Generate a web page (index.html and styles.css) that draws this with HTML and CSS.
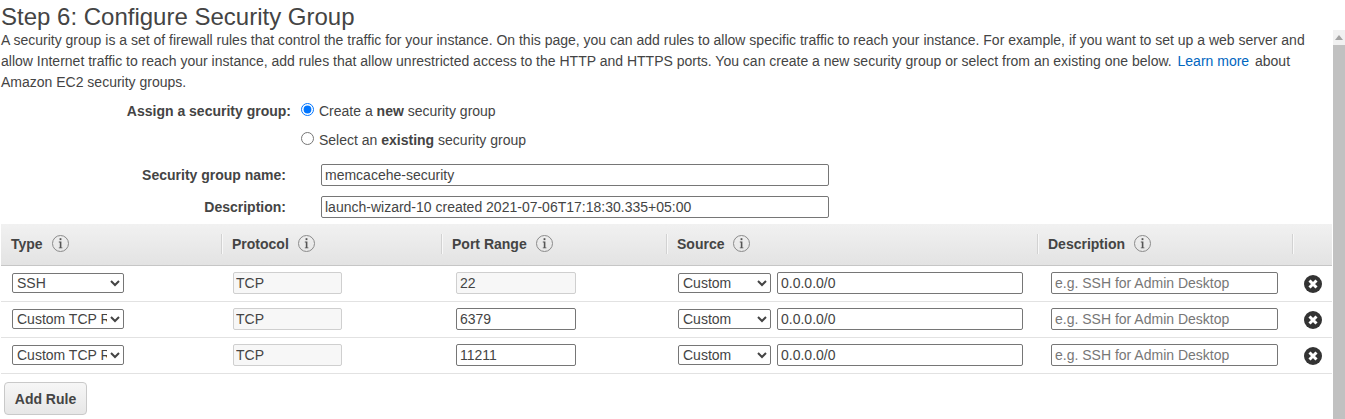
FILE: index.html
```html
<!DOCTYPE html>
<html lang="en">
<head>
<meta charset="utf-8">
<title>Step 6: Configure Security Group</title>
<link rel="stylesheet" href="styles.css">
</head>
<body>
<svg class="defs" width="0" height="0" aria-hidden="true">
  <symbol id="info" viewBox="0 0 17 17">
    <circle cx="8.5" cy="8.5" r="8" fill="none" stroke="#8a8a8a" stroke-width="1"/>
    <rect x="7.6" y="3.2" width="1.8" height="1.9" fill="#555"/>
    <path d="M6.8 6.6h2.6v5.8h1v.9H6.8v-.9h1V7.5h-1z" fill="#555"/>
  </symbol>
  <symbol id="remove" viewBox="0 0 18 18">
    <circle cx="9" cy="9" r="9" fill="#333"/>
    <path d="M5.5 5.5l7 7M12.5 5.5l-7 7" stroke="#fff" stroke-width="3" fill="none"/>
  </symbol>
</svg>
<h1 class="title">Step 6: Configure Security Group</h1>
<div class="pane">
  <main class="content">
    <p class="intro">A security group is a set of firewall rules that control the traffic for your instance. On this page, you can add rules to allow specific traffic to reach your instance. For example, if you want to set up a web server and allow Internet traffic to reach your instance, add rules that allow unrestricted access to the HTTP and HTTPS ports. You can create a new security group or select from an existing one below. <a href="#" class="link">Learn more</a> about Amazon EC2 security groups.</p>

    <div class="assign">
      <div class="assign-label">Assign a security group:</div>
      <div class="assign-options">
        <label class="option"><input type="radio" name="sg" class="radio" checked><span>Create a <b>new</b> security group</span></label>
        <label class="option"><input type="radio" name="sg" class="radio"><span>Select an <b>existing</b> security group</span></label>
      </div>
    </div>

    <div class="fields">
      <label class="field-label" for="sg-name">Security group name:</label>
      <input id="sg-name" class="ctl field-input" type="text" value="memcacehe-security">
      <label class="field-label" for="sg-desc">Description:</label>
      <input id="sg-desc" class="ctl field-input" type="text" value="launch-wizard-10 created 2021-07-06T17:18:30.335+05:00">
    </div>

    <table class="rules">
      <colgroup>
        <col class="c-type"><col class="c-proto"><col class="c-port"><col class="c-source"><col class="c-desc"><col class="c-x">
      </colgroup>
      <thead>
        <tr>
          <th><div class="th first">Type <svg class="info"><use href="#info"/></svg></div></th>
          <th><div class="th">Protocol <svg class="info"><use href="#info"/></svg></div></th>
          <th><div class="th">Port Range <svg class="info"><use href="#info"/></svg></div></th>
          <th><div class="th">Source <svg class="info"><use href="#info"/></svg></div></th>
          <th><div class="th">Description <svg class="info"><use href="#info"/></svg></div></th>
          <th><div class="th">&nbsp;</div></th>
        </tr>
      </thead>
      <tbody>
        <tr>
          <td class="p-type"><select class="ctl sel type-sel"><option>SSH</option></select></td>
          <td class="p-proto"><input class="ctl proto ro" type="text" value="TCP" readonly></td>
          <td class="p-port"><input class="ctl port ro" type="text" value="22" readonly></td>
          <td class="p-source"><div class="source"><select class="ctl sel source-sel"><option>Custom</option></select><input class="ctl cidr" type="text" value="0.0.0.0/0"></div></td>
          <td class="p-desc"><input class="ctl desc" type="text" placeholder="e.g. SSH for Admin Desktop"></td>
          <td class="p-x"><svg class="remove"><use href="#remove"/></svg></td>
        </tr>
        <tr>
          <td class="p-type"><select class="ctl sel type-sel"><option>Custom TCP Rule</option></select></td>
          <td class="p-proto"><input class="ctl proto ro" type="text" value="TCP" readonly></td>
          <td class="p-port"><input class="ctl port" type="text" value="6379"></td>
          <td class="p-source"><div class="source"><select class="ctl sel source-sel"><option>Custom</option></select><input class="ctl cidr" type="text" value="0.0.0.0/0"></div></td>
          <td class="p-desc"><input class="ctl desc" type="text" placeholder="e.g. SSH for Admin Desktop"></td>
          <td class="p-x"><svg class="remove"><use href="#remove"/></svg></td>
        </tr>
        <tr>
          <td class="p-type"><select class="ctl sel type-sel"><option>Custom TCP Rule</option></select></td>
          <td class="p-proto"><input class="ctl proto ro" type="text" value="TCP" readonly></td>
          <td class="p-port"><input class="ctl port" type="text" value="11211"></td>
          <td class="p-source"><div class="source"><select class="ctl sel source-sel"><option>Custom</option></select><input class="ctl cidr" type="text" value="0.0.0.0/0"></div></td>
          <td class="p-desc"><input class="ctl desc" type="text" placeholder="e.g. SSH for Admin Desktop"></td>
          <td class="p-x"><svg class="remove"><use href="#remove"/></svg></td>
        </tr>
      </tbody>
    </table>
    <button class="add" type="button">Add Rule</button>
  </main>
  <div class="scrollbar" aria-hidden="true">
    <div class="scroll-arrow"></div>
    <div class="scroll-thumb"></div>
  </div>
</div>
</body>
</html>
```

FILE: styles.css
```css
html, body {
  margin: 0;
  padding: 0;
  height: 419px;
  overflow: hidden;
  background: #fff;
}
body {
  font-family: "Liberation Sans", Arial, sans-serif;
  font-size: 14px;
  line-height: 21px;
  color: #444;
}
.defs { position: absolute; }

.title {
  margin: 0;
  padding-left: 1px;
  height: 30px;
  font-size: 24px;
  line-height: 33px;
  font-weight: 400;
  color: #444;
}
.pane {
  display: flex;
  height: 389px;
}
.content {
  width: 1333px;
  flex: none;
  padding-left: 1px;
  box-sizing: border-box;
}
.intro {
  margin: 0;
  width: 1320px;
}
.link {
  color: #0066c0;
  text-decoration: none;
  margin: 0 2px;
}

.assign {
  display: flex;
  margin-top: 8px;
}
.assign-label {
  width: 290px;
  text-align: right;
  font-weight: 700;
  line-height: 21px;
  flex: none;
}
.assign-options {
  display: flex;
  flex-direction: column;
  gap: 8px;
  padding-left: 10px;
}
.option {
  display: flex;
  align-items: flex-start;
  gap: 5px;
  height: 21px;
}
.radio {
  margin: 2px 0 0;
  width: 13px;
  height: 13px;
  accent-color: #0075ff;
}

.ctl {
  box-sizing: border-box;
  font-family: "Liberation Sans", Arial, sans-serif;
  font-size: 14px;
  color: #444;
  background: #fff;
  border: 1px solid #767676;
  border-radius: 2px;
  padding: 0 3px;
  margin: 0;
  outline: none;
}
.ctl::placeholder { color: #777; opacity: 1; }

.fields {
  display: grid;
  grid-template-columns: 285px 508px;
  column-gap: 35px;
  row-gap: 10px;
  align-items: center;
  margin-top: 13px;
}
.field-label {
  text-align: right;
  font-weight: 700;
  line-height: 21px;
}
.field-input { height: 22px; width: 508px; }

.rules {
  table-layout: fixed;
  border-collapse: collapse;
  border-spacing: 0;
  width: 1331px;
  margin-top: 6px;
}
.c-type { width: 220px; }
.c-proto { width: 220px; }
.c-port { width: 225px; }
.c-source { width: 371px; }
.c-desc { width: 255px; }
.c-x { width: 40px; }

.rules th {
  height: 39px;
  padding: 0 0 2px;
  background: linear-gradient(#f1f1f1, #e3e3e3);
  border-bottom: 1px solid #c6c6c6;
  text-align: left;
  vertical-align: middle;
  box-sizing: content-box;
}
.th {
  display: flex;
  align-items: center;
  height: 20px;
  padding-left: 10px;
  border-left: 1px solid #d2d2d2;
  box-shadow: inset 1px 0 0 #f8f8f8;
  font-weight: 700;
  white-space: pre;
  line-height: 20px;
}
.th.first {
  border-left-color: transparent;
  box-shadow: none;
  padding-left: 9px;
}
.info {
  width: 17px;
  height: 17px;
  margin-left: 5px;
  flex: none;
}

.rules td {
  height: 34px;
  padding: 0 0 1px;
  border-bottom: 1px solid #e2e2e2;
  vertical-align: middle;
  box-sizing: content-box;
}
.rules .p-type { padding-left: 11px; }
.rules .p-proto { padding-left: 12px; }
.rules .p-port { padding-left: 15px; }
.rules .p-source { padding-left: 12px; }
.rules .p-desc { padding-left: 14px; }
.rules .p-x { padding-left: 12px; }

.rules input, .rules select { display: block; }
.sel { height: 20px; padding: 0; }
.type-sel { width: 112px; }
.source-sel { width: 93px; }
.proto { width: 109px; height: 22px; padding-left: 2px; }
.port { width: 120px; height: 22px; }
.ro {
  background: #f7f7f7;
  border-color: #cfcfcf;
}
.source {
  display: flex;
  align-items: center;
  gap: 6px;
}
.cidr { width: 246px; height: 22px; }
.desc { width: 227px; height: 22px; }
.remove {
  display: block;
  width: 18px;
  height: 18px;
  margin-top: 2px;
}

.add {
  display: block;
  margin: 8px 0 0 3px;
  width: 83px;
  height: 33px;
  padding: 0;
  font-family: "Liberation Sans", Arial, sans-serif;
  font-size: 14px;
  font-weight: 700;
  color: #444;
  background: linear-gradient(#f6f6f6, #e7e7e7);
  border: 1px solid #c9c9c9;
  border-radius: 4px;
}

.scrollbar {
  width: 12px;
  flex: none;
  display: flex;
  flex-direction: column;
  background: #f1f1f1;
}
.scroll-arrow {
  height: 15px;
  flex: none;
  position: relative;
}
.scroll-arrow::after {
  content: "";
  position: absolute;
  left: 2px;
  top: 5px;
  border-left: 4px solid transparent;
  border-right: 4px solid transparent;
  border-bottom: 5px solid #a3a3a3;
}
.scroll-thumb {
  flex: 1;
  background: #c1c1c1;
}
```
